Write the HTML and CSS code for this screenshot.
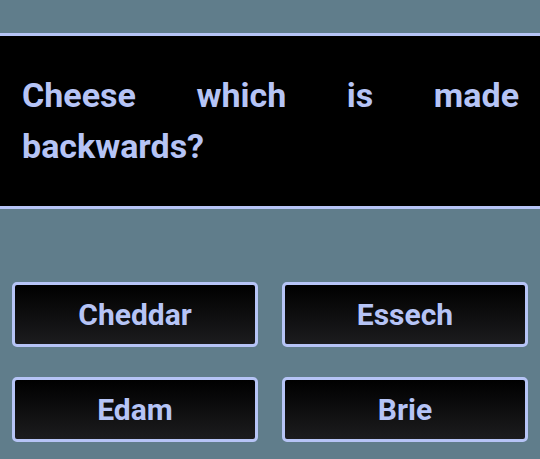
FILE: index.html
```html
<!DOCTYPE html>
<html>
<head>
<meta charset="utf-8">
<link rel="stylesheet" href="styles.css">
</head>
<body>
<div class="page">
  <div class="question">
    <p class="question-text">Cheese which is made backwards?</p>
  </div>
  <div class="answers">
    <button class="answer">Cheddar</button>
    <button class="answer">Essech</button>
    <button class="answer">Edam</button>
    <button class="answer">Brie</button>
  </div>
</div>
</body>
</html>
```
FILE: styles.css
```css
html, body {
  margin: 0;
  padding: 0;
  background: #607d8b;
  height: 100%;
}
.page {
  padding-top: 33px;
  font-family: Roboto, "Liberation Sans", sans-serif;
  color: #b6c4f6;
}
.question {
  background: #000;
  border-top: 3px solid #b6c4f6;
  border-bottom: 3px solid #b6c4f6;
  padding: 34px 21px 34px 22px;
}
.question-text {
  margin: 0;
  font-size: 34px;
  font-weight: 700;
  line-height: 51px;
  text-align: justify;
}
.answers {
  display: grid;
  grid-template-columns: 1fr 1fr;
  column-gap: 24px;
  row-gap: 30px;
  padding: 73px 12px 0;
}
.answer {
  height: 65px;
  border: 3px solid #b6c4f6;
  border-radius: 5px;
  background: linear-gradient(#000, #1c1c1e);
  color: #b6c4f6;
  font-family: Roboto, "Liberation Sans", sans-serif;
  font-size: 30px;
  font-weight: 700;
  display: flex;
  align-items: center;
  justify-content: center;
  padding: 0;
}
```
